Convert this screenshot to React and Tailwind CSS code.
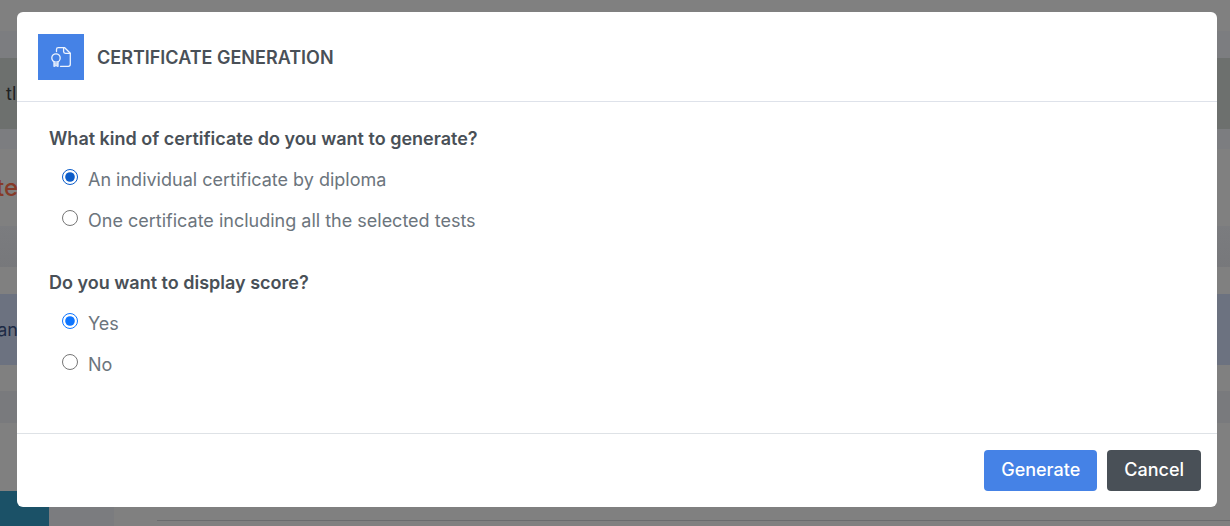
import React from "react";

function CertificateIcon() {
  return (
    <svg
      aria-hidden="true"
      viewBox="0 0 20 20"
      className="size-5"
      fill="none"
      stroke="#eef4fe"
      strokeWidth="1.3"
      strokeLinecap="round"
      strokeLinejoin="round"
    >
      <path d="M5.5 4.5V2.5A1.8 1.8 0 0 1 7.3.7h6.4l5.6 5.6v11a2 2 0 0 1-2 2H9.5" />
      <path d="M12.6.7v3.8a1.8 1.8 0 0 0 1.8 1.8h4.9" />
      <circle cx="5" cy="11" r="4.2" />
      <path d="M3 15v4.3l2-.8 2 .8V15M3 17h4" />
    </svg>
  );
}

function Choice({ id, name, defaultChecked, tone, children }) {
  return (
    <div className="flex items-start gap-[10px] pl-[13px]">
      <input
        type="radio"
        id={id}
        name={name}
        defaultChecked={defaultChecked}
        className={`m-0 mt-[3px] size-4 shrink-0 ${tone}`}
      />
      <label htmlFor={id} className="text-[#6c757d]">
        {children}
      </label>
    </div>
  );
}

function Question({ title, children }) {
  return (
    <fieldset>
      <legend className="mb-[14px] font-semibold text-[#495057]">{title}</legend>
      <div className="flex flex-col gap-[14px]">{children}</div>
    </fieldset>
  );
}

function Backdrop() {
  return (
    <div aria-hidden="true" className="flex min-h-screen flex-col overflow-hidden bg-[#808080]">
      <div className="h-[31px]" />
      <div className="h-[27px] bg-[#7c7d80]" />
      <div className="flex h-[71px] items-center bg-[#6d706e] pl-[6px] text-lg text-[#1f2122]">tl</div>
      <div className="h-5 bg-[#7c7d80]" />
      <div className="flex h-[77px] w-[18px] items-center justify-end text-2xl font-medium text-[#863a28]">te</div>
      <div className="h-[41px] bg-gradient-to-b from-[#7b7c7f] to-[#77787b]" />
      <div className="h-[27px]" />
      <div className="bg-[#6c7280]">
        <div className="flex h-[71px] w-[18px] items-center justify-end text-lg text-[#1d2a45]">an</div>
      </div>
      <div className="h-[26px]" />
      <div className="h-8 bg-[#797a7d]" />
      <div className="flex grow items-end">
        <div className="h-[35px] w-[49px] bg-[#1b5167]" />
        <div className="h-[35px] w-[65px] bg-[#7b7c7f]" />
        <div className="mb-[5px] ml-[43px] h-px grow bg-[#6b6c6e]" />
      </div>
    </div>
  );
}

export default function App() {
  return (
    <div className="relative font-['Inter',sans-serif]">
      <Backdrop />
      <div className="absolute inset-0 pt-3 pr-[13px] pl-[17px]">
        <section
          role="dialog"
          aria-modal="true"
          aria-labelledby="dialog-title"
          className="rounded-md bg-white text-lg leading-[27px]"
        >
          <header className="flex items-center gap-[13px] border-b border-[#dee2ea] px-[21px] pt-[22px] pb-[21px]">
            <span className="flex size-[46px] items-center justify-center bg-[#4582e6]">
              <CertificateIcon />
            </span>
            <h1 id="dialog-title" className="font-semibold text-[#495057]">
              CERTIFICATE GENERATION
            </h1>
          </header>

          <form id="certificate-form" className="flex flex-col gap-[35px] px-8 pt-[23px] pb-[55px]">
            <Question title="What kind of certificate do you want to generate?">
              <Choice id="kind-single" name="kind" defaultChecked tone="accent-[#0b5cc9]">
                An individual certificate by diploma
              </Choice>
              <Choice id="kind-all" name="kind" tone="accent-[#0b5cc9]">
                One certificate including all the selected tests
              </Choice>
            </Question>
            <Question title="Do you want to display score?">
              <Choice id="score-yes" name="score" defaultChecked tone="accent-[#0d75ff]">
                Yes
              </Choice>
              <Choice id="score-no" name="score" tone="accent-[#0d75ff]">
                No
              </Choice>
            </Question>
          </form>

          <footer className="flex justify-end gap-[10px] border-t border-[#dee2e6] p-4 font-medium">
            <button type="button" className="rounded-[4px] bg-[#4582e6] px-[17px] pt-[6px] pb-2 text-white">
              Generate
            </button>
            <button type="button" className="rounded-[4px] bg-[#495057] px-[17px] pt-[6px] pb-2 text-white">
              Cancel
            </button>
          </footer>
        </section>
      </div>
    </div>
  );
}
